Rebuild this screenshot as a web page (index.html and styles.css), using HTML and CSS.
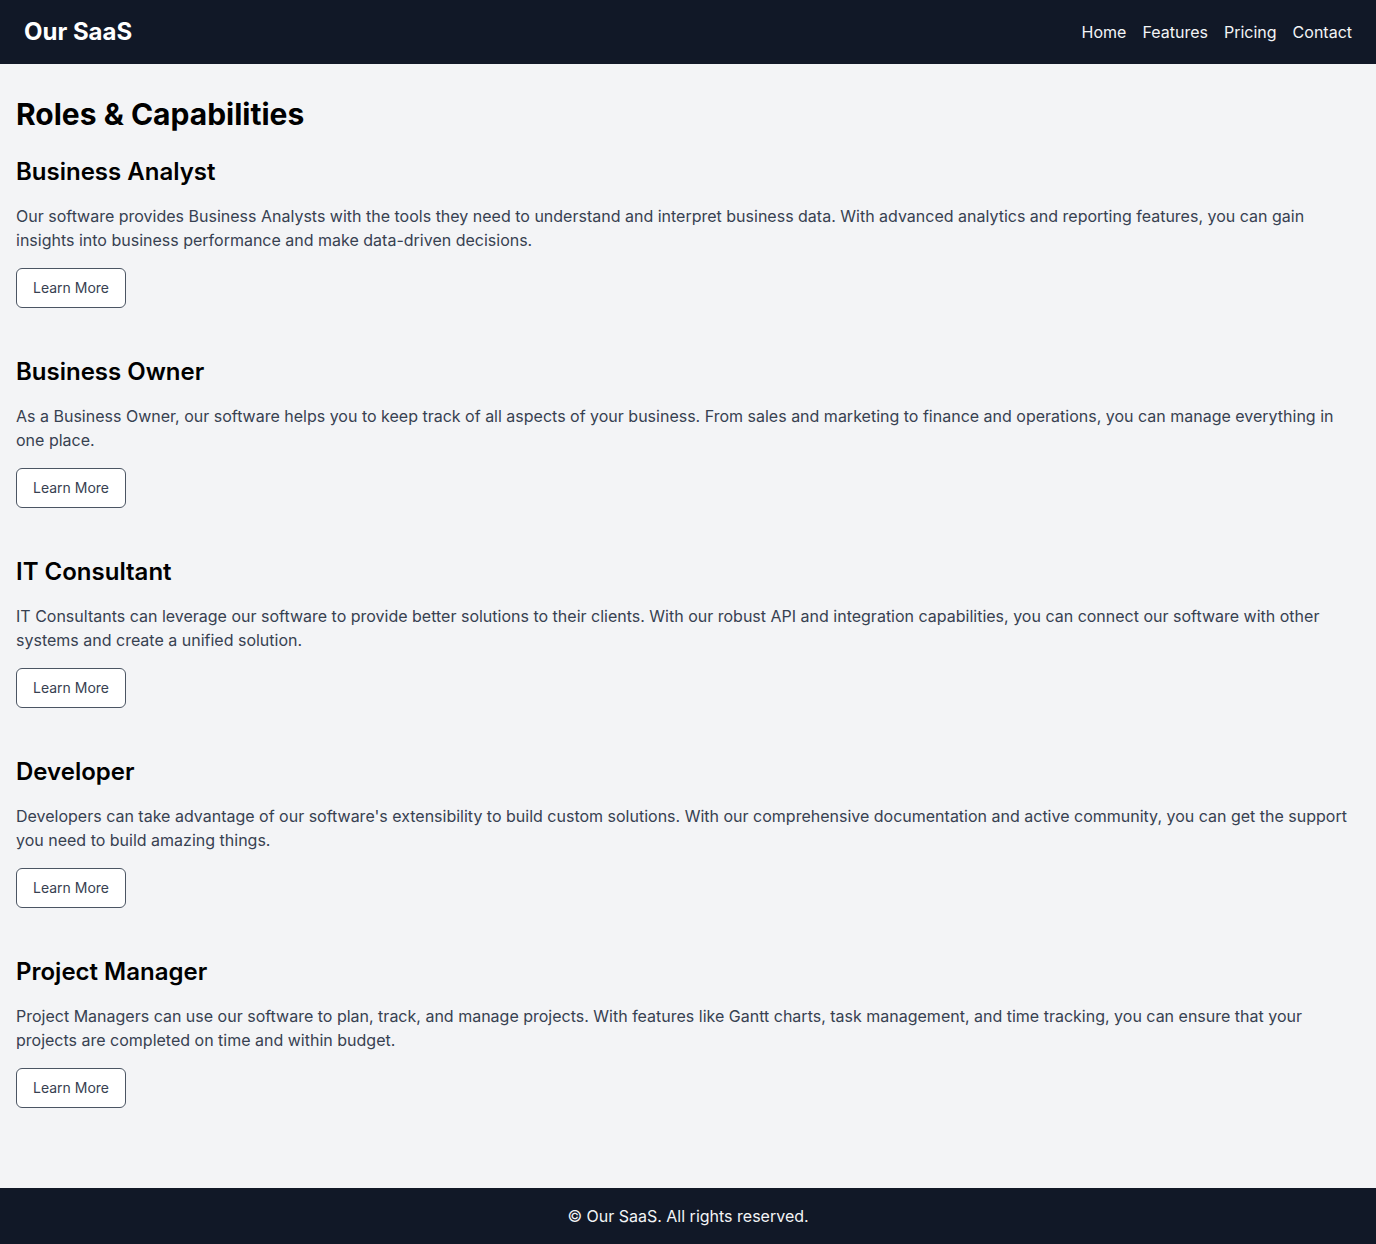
FILE: index.html
```html
<!DOCTYPE html>
<html lang="en">
<head>
<meta charset="utf-8">
<title>Our SaaS</title>
<link rel="stylesheet" href="styles.css">
</head>
<body>
<header class="site-header">
  <div class="brand">Our SaaS</div>
  <nav class="nav">
    <a href="#">Home</a>
    <a href="#">Features</a>
    <a href="#">Pricing</a>
    <a href="#">Contact</a>
  </nav>
</header>
<main class="main">
  <h1 class="title">Roles &amp; Capabilities</h1>
  <section class="role">
    <h2>Business Analyst</h2>
    <p>Our software provides Business Analysts with the tools they need to understand and interpret business data. With advanced analytics and reporting features, you can gain insights into business performance and make data-driven decisions.</p>
    <button class="btn">Learn More</button>
  </section>
  <section class="role">
    <h2>Business Owner</h2>
    <p>As a Business Owner, our software helps you to keep track of all aspects of your business. From sales and marketing to finance and operations, you can manage everything in one place.</p>
    <button class="btn">Learn More</button>
  </section>
  <section class="role">
    <h2>IT Consultant</h2>
    <p>IT Consultants can leverage our software to provide better solutions to their clients. With our robust API and integration capabilities, you can connect our software with other systems and create a unified solution.</p>
    <button class="btn">Learn More</button>
  </section>
  <section class="role">
    <h2>Developer</h2>
    <p>Developers can take advantage of our software's extensibility to build custom solutions. With our comprehensive documentation and active community, you can get the support you need to build amazing things.</p>
    <button class="btn">Learn More</button>
  </section>
  <section class="role">
    <h2>Project Manager</h2>
    <p>Project Managers can use our software to plan, track, and manage projects. With features like Gantt charts, task management, and time tracking, you can ensure that your projects are completed on time and within budget.</p>
    <button class="btn">Learn More</button>
  </section>
</main>
<footer class="site-footer">© Our SaaS. All rights reserved.</footer>
</body>
</html>
```
FILE: styles.css
```css
* { box-sizing: border-box; }
html, body { margin: 0; padding: 0; }
body {
  font-family: Inter, "Noto Sans", sans-serif;
  background: #f3f4f6;
  color: #000;
}
.site-header {
  background: #111827;
  color: #fff;
  display: flex;
  justify-content: space-between;
  align-items: center;
  padding: 16px 24px;
  height: 64px;
}
.brand {
  font-size: 24px;
  line-height: 32px;
  font-weight: 700;
}
.nav {
  display: flex;
  gap: 16px;
}
.nav a {
  color: #f3f4f6;
  text-decoration: none;
  font-size: 16px;
  line-height: 24px;
}
.main {
  padding: 32px 16px;
}
.title {
  font-size: 30px;
  line-height: 36px;
  font-weight: 700;
  margin: 0 0 24px;
}
.role {
  margin-bottom: 48px;
}
.role h2 {
  font-size: 24px;
  line-height: 32px;
  font-weight: 600;
  margin: 0 0 16px;
}
.role p {
  font-size: 16px;
  line-height: 24px;
  color: #374151;
  margin: 0 0 16px;
}
.btn {
  display: inline-block;
  font-family: inherit;
  font-size: 14px;
  line-height: 20px;
  padding: 9px 16px;
  background: #fff;
  color: #374151;
  border: 1px solid #4b5563;
  border-radius: 6px;
  cursor: pointer;
}
.site-footer {
  background: #111827;
  color: #f3f4f6;
  text-align: center;
  font-size: 16px;
  line-height: 24px;
  padding: 16px;
}
```
